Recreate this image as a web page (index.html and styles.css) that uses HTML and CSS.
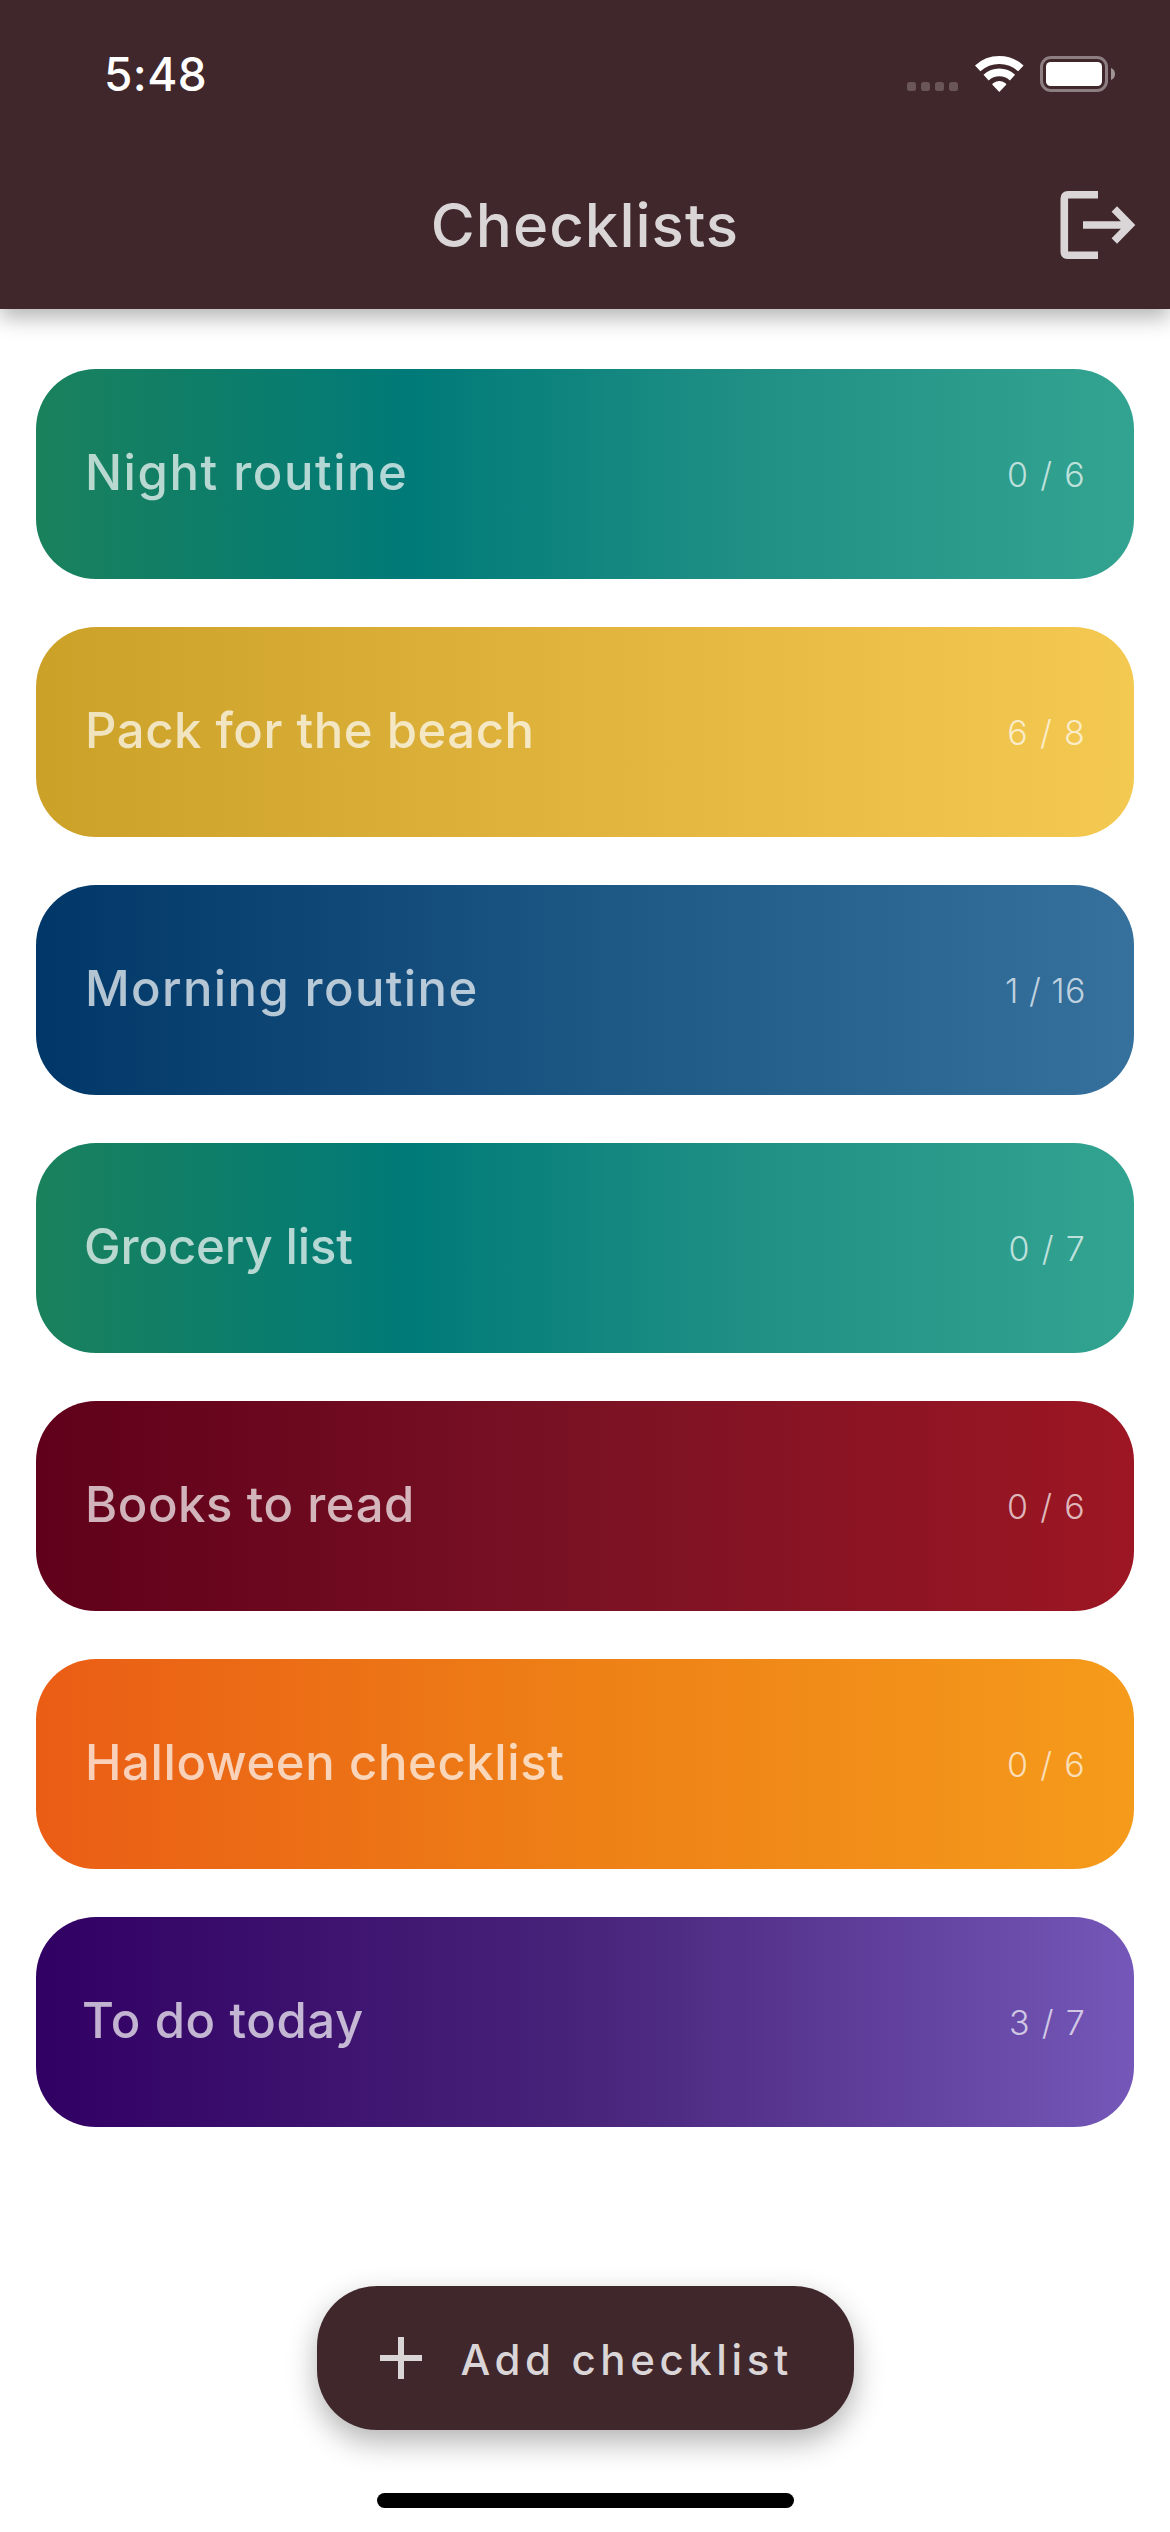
FILE: index.html
```html
<!DOCTYPE html>
<html lang="en">
<head>
  <meta charset="utf-8">
  <title>Checklists</title>
  <link rel="stylesheet" href="styles.css">
</head>
<body>
  <div class="screen">
    <header class="header">
      <div class="status-bar">
        <span class="time">5:48</span>
        <div class="status-icons">
          <div class="signal"><i></i><i></i><i></i><i></i></div>
          <svg class="wifi" viewBox="0 0 49 37" width="49" height="37" fill="none" stroke="#fff">
            <path d="M2.7 12.4A32 32 0 0 1 45.9 12.4" stroke-width="8"/>
            <path d="M11.1 21.6A19.5 19.5 0 0 1 37.5 21.6" stroke-width="7.7"/>
            <path d="M24.3 36L17.2 28.5Q17.4 27.6 18.4 26.9A11 11 0 0 1 30.2 26.9Q31.2 27.6 31.4 28.5Z" fill="#fff" stroke="none"/>
          </svg>
          <svg class="battery" viewBox="0 0 75 36" width="75" height="36">
            <rect x="1.5" y="1.5" width="65" height="33" rx="9.5" fill="none" stroke="#8d7f81" stroke-width="3"/>
            <rect x="6" y="6" width="56" height="24" rx="4.5" fill="#fff"/>
            <path d="M71 12Q75 13.6 75 18T71 24Z" fill="#a09496"/>
          </svg>
        </div>
      </div>
      <div class="nav-bar">
        <h1 class="title">Checklists</h1>
        <button class="logout" aria-label="Log out">
          <svg viewBox="0 0 76 68" width="76" height="68" fill="none" stroke="currentColor" stroke-width="7.6">
            <path d="M38 3.8H8Q4.3 3.8 4.3 7.5V60.5Q4.3 64.2 8 64.2H38"/>
            <path d="M23 34H68M54.3 18L70 34L54.3 50"/>
          </svg>
        </button>
      </div>
    </header>

    <main class="lists">
      <article class="card teal"><h2 class="name night">Night routine</h2><span class="count">0 / 6</span></article>
      <article class="card yellow"><h2 class="name beach">Pack for the beach</h2><span class="count">6 / 8</span></article>
      <article class="card blue"><h2 class="name morning">Morning routine</h2><span class="count tight">1 / 16</span></article>
      <article class="card teal"><h2 class="name grocery">Grocery list</h2><span class="count">0 / 7</span></article>
      <article class="card red"><h2 class="name books">Books to read</h2><span class="count">0 / 6</span></article>
      <article class="card orange"><h2 class="name halloween">Halloween checklist</h2><span class="count">0 / 6</span></article>
      <article class="card purple"><h2 class="name today">To do today</h2><span class="count">3 / 7</span></article>
    </main>

    <footer class="footer">
      <button class="add">
        <svg viewBox="0 0 42 42" width="42" height="42" stroke="currentColor" stroke-width="6"><path d="M21 0V42M0 21H42"/></svg>
        <span>Add checklist</span>
      </button>
      <div class="home-indicator"></div>
    </footer>
  </div>
</body>
</html>
```
FILE: styles.css
```css
* { box-sizing: border-box; }

body {
  margin: 0;
  background: #fff;
  font-family: Inter, "Liberation Sans", sans-serif;
}

h1, h2 { margin: 0; font-weight: 500; }

button {
  border: 0;
  padding: 0;
  background: none;
  font: inherit;
  color: #dad5d6;
}

svg { display: block; }

.screen {
  display: flex;
  flex-direction: column;
  width: 1170px;
  height: 2532px;
  overflow: hidden;
}

.header {
  height: 309px;
  background: #40272b;
  box-shadow: 0 9px 20px rgba(0, 0, 0, .29);
}

.status-bar {
  display: flex;
  justify-content: space-between;
  align-items: center;
  height: 141px;
  padding: 7px 55px 0 104px;
}

.time {
  color: #fff;
  font-size: 46px;
  font-weight: 550;
  letter-spacing: .4px;
  line-height: 56px;
}

.status-icons { display: flex; align-items: center; }

.signal { display: flex; gap: 5px; margin: 25px 17px 0 0; }
.signal i { width: 9px; height: 9px; border-radius: 2.5px; background: #6a5558; }

.wifi { margin-right: 16px; }

.nav-bar {
  display: grid;
  grid-template-columns: 1fr auto 1fr;
  align-items: center;
  height: 168px;
  padding: 0 34px;
}

.title {
  grid-column: 2;
  color: #dad5d6;
  font-size: 60px;
  letter-spacing: 1px;
}

.logout { justify-self: end; }

.lists {
  display: flex;
  flex-direction: column;
  gap: 48px;
  padding: 60px 36px 0;
}

.card {
  display: flex;
  justify-content: space-between;
  align-items: center;
  height: 210px;
  padding: 0 48px 0 49px;
  border-radius: 60px;
  color: rgba(255, 255, 255, .7);
}

.teal { background: linear-gradient(90deg, #1a815c, #007a78 34%, #209085 65%, #33a391); }
.yellow { background: linear-gradient(90deg, #cba128, #e3b640 55%, #f4c951); }
.blue { background: linear-gradient(90deg, #003768, #1f5a87 55%, #36709c); }
.red { background: linear-gradient(90deg, #60001a, #7a1224 50%, #9d1623); }
.orange { background: linear-gradient(90deg, #ea5d15, #ee8016 50%, #f59b1b); }
.purple { background: linear-gradient(90deg, #310063, #48247a 50%, #7457b8); }

.name { margin-bottom: 3px; font-size: 49px; line-height: 60px; }
.night { letter-spacing: 1.54px; }
.beach { letter-spacing: .54px; }
.morning { letter-spacing: 1.37px; }
.grocery { margin-left: -1px; letter-spacing: -.1px; }
.books { letter-spacing: .57px; }
.halloween { letter-spacing: .63px; }
.today { margin-left: -3px; letter-spacing: .61px; }

.count { font-size: 34px; font-weight: 300; letter-spacing: 1.3px; }
.tight { letter-spacing: .46px; }

.footer {
  display: flex;
  flex-direction: column;
  align-items: center;
  justify-content: space-between;
  height: 222px;
  margin-top: auto;
  margin-bottom: 24px;
}

.add {
  display: flex;
  align-items: center;
  gap: 39px;
  width: 537px;
  height: 144px;
  padding-left: 63px;
  border-radius: 60px;
  background: #40272b;
  box-shadow: 0 12px 30px rgba(0, 0, 0, .3);
  font-size: 42px;
  font-weight: 500;
  letter-spacing: 4.6px;
}

.add span { padding-top: 3px; }

.home-indicator {
  width: 417px;
  height: 15px;
  border-radius: 8px;
  background: #000;
}
```
